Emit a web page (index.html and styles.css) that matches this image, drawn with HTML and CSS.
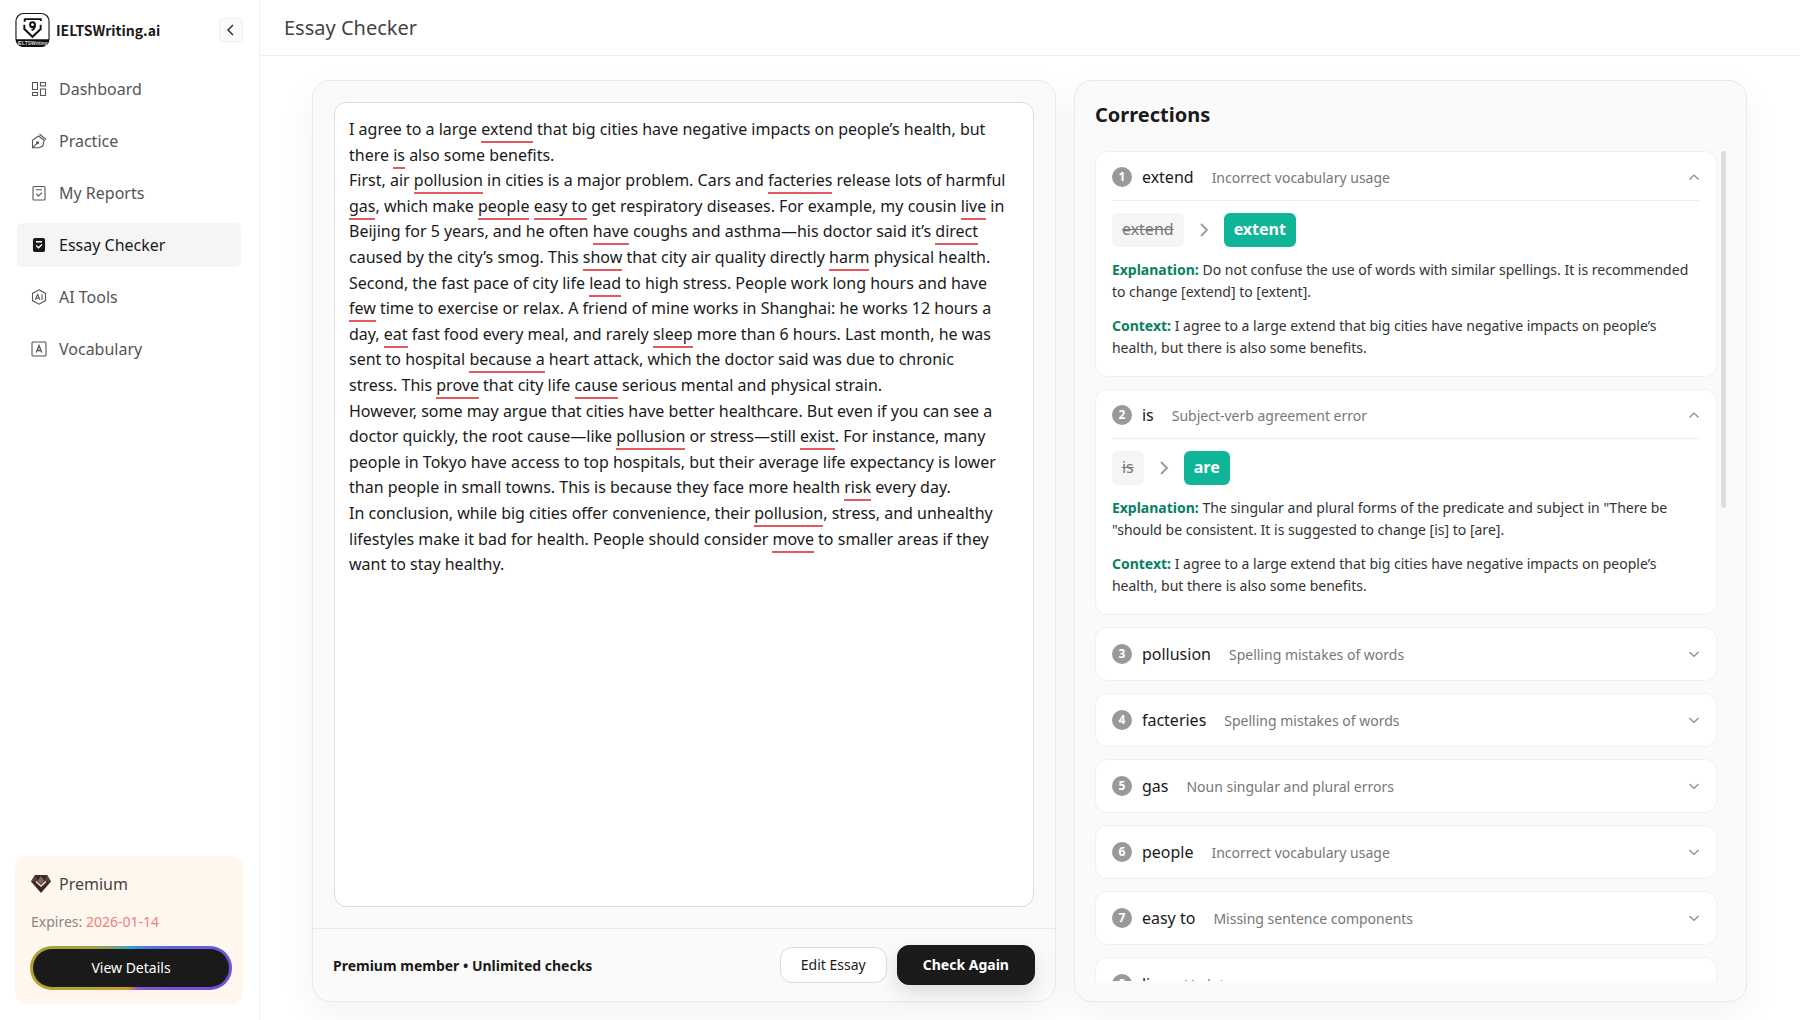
FILE: index.html
```
<!DOCTYPE html>
<html lang="en">
<head>
<meta charset="utf-8">
<title>Essay Checker</title>
<link rel="stylesheet" href="styles.css">
</head>
<body>
<div class="app">
  <aside class="sidebar">
    <div class="brand">
      <svg class="brand-logo" viewBox="0 0 36 36" aria-hidden="true">
        <rect x="1" y="1" width="34" height="34" rx="8" fill="#fff" stroke="#1a1a1a" stroke-width="1.2"/>
        <path d="M1 27.5h34V28a7 7 0 0 1-7 7H8a7 7 0 0 1-7-7z" fill="#0c0c0c"/>
        <text x="18" y="33" text-anchor="middle" class="logo-caption">IELTSWriting</text>
        <path d="M9.500 6.800h17v2M10 6.500v3M9.600 12.500v4.500l8.400 8 8.400-8v-4.500" fill="none" stroke="#111" stroke-width="2"/>
        <circle cx="18" cy="12.500" r="2.500" fill="none" stroke="#111" stroke-width="2"/>
        <path d="M20.500 13q0 4-3.500 5" fill="none" stroke="#111" stroke-width="2"/>
      </svg>
      <span class="brand-name">IELTSWriting.ai</span>
      <button class="collapse" type="button" aria-label="Collapse sidebar">
        <svg width="14" height="14" viewBox="0 0 14 14"><path d="M9 2L4 7l5 5" fill="none" stroke="#222" stroke-width="1.400"/></svg>
      </button>
    </div>
    <nav class="nav">
      <a class="nav-item" href="#"><svg class="icon" viewBox="0 0 16 16"><path d="M1.500 1.500h5v7h-5zM9.500 1.500h5v3.500h-5zM1.500 11.500h5v3h-5zM9.500 8h5v6.500h-5z"/></svg>Dashboard</a>
      <a class="nav-item" href="#"><svg class="icon" viewBox="0 0 16 16"><path d="M1.500 14.800V7.200L7.500 3l5.800 4.500-1.600 5.500-3.500 1.800zM8.500 1l6.500 5.500M1.500 14.800l4.500-4.500"/><circle cx="6.500" cy="9.800" r="1" fill="currentColor"/></svg>Practice</a>
      <a class="nav-item" href="#"><svg class="icon" viewBox="0 0 16 16"><rect x="2" y="1.500" width="12" height="13.500" rx="1"/><path d="M5 4.800h6M5.200 8.800l2.300 2.200 3.500-3.300"/></svg>My Reports</a>
      <a class="nav-item active" href="#" aria-current="page"><svg class="icon" viewBox="0 0 16 16"><rect x="2.500" y="1.500" width="11" height="13" rx="1.500" fill="currentColor"/><path stroke="#fff" stroke-width="1.400" d="M5 4.800h6M5.200 8.600l2.300 2.200 3.500-3.300"/></svg>Essay Checker</a>
      <a class="nav-item" href="#"><svg class="icon" viewBox="0 0 16 16"><path d="M8 .8l6.500 3.600v7.200L8 15.200l-6.500-3.600V4.400z"/><path d="M4.300 10.800l2.300-5.400 2.300 5.400M5.200 9.300h2.900M11 5.300v5.600"/></svg>AI Tools</a>
      <a class="nav-item" href="#"><svg class="icon" viewBox="0 0 16 16"><rect x="1" y="1" width="14" height="14" rx="1"/><path stroke-width="1.300" d="M5.200 11.500L8 4.500l2.800 7M6.200 9.500h3.600"/></svg>Vocabulary</a>
    </nav>
    <section class="plan">
      <div class="plan-title">
        <svg width="20" height="20" viewBox="0 0 20 20" aria-hidden="true">
          <path d="M4 1h12l4 6.500L10 19 0 7.500z" fill="#3b2a22"/>
          <path d="M4 1l2.500 6L0 7.500zM16 1l-2.500 6 6.500.5z" fill="#5c463b"/>
          <path d="M6.500 7L10 2l3.500 5L10 10z" fill="#80675a"/>
          <path d="M5 7.500l5 4.500 5-4.500" fill="none" stroke="#f6e6d8" stroke-width="1.600"/>
        </svg>
        <span>Premium</span>
      </div>
      <p class="plan-expiry">Expires: <span class="plan-date">2026-01-14</span></p>
      <button class="plan-button" type="button">View Details</button>
    </section>
  </aside>

  <div class="page">
    <header class="topbar"><h1 class="page-title">Essay Checker</h1></header>
    <main class="workspace">
      <section class="panel essay-panel">
        <div class="essay-area">
          <div class="essay">
            <p>I agree to a large <mark>extend</mark> that big cities have negative impacts on people’s health, but there <mark>is</mark> also some benefits.</p>
            <p>First, air <mark>pollusion</mark> in cities is a major problem. Cars and <mark>facteries</mark> release lots of harmful <mark>gas</mark>, which make <mark>people</mark> <mark>easy to</mark> get respiratory diseases. For example, my cousin <mark>live</mark> in Beijing for 5 years, and he often <mark>have</mark> coughs and asthma—his doctor said it’s <mark>direct</mark> caused by the city’s smog. This <mark>show</mark> that city air quality directly <mark>harm</mark> physical health.</p>
            <p>Second, the fast pace of city life <mark>lead</mark> to high stress. People work long hours and have <mark>few</mark> time to exercise or relax. A friend of mine works in Shanghai: he works 12 hours a day, <mark>eat</mark> fast food every meal, and rarely <mark>sleep</mark> more than 6 hours. Last month, he was sent to hospital <mark>because a</mark> heart attack, which the doctor said was due to chronic stress.&nbsp;This <mark>prove</mark> that city life <mark>cause</mark> serious mental and physical strain.</p>
            <p>However, some may argue that cities have better healthcare. But even if you can see a doctor quickly, the root cause—like <mark>pollusion</mark> or stress—still <mark>exist</mark>. For instance, many people in Tokyo have access to top hospitals, but their average life expectancy is lower than people in small towns. This is because they face more health <mark>risk</mark> every day.</p>
            <p>In conclusion, while big cities offer convenience, their <mark>pollusion</mark>, stress, and unhealthy lifestyles make it bad for health. People should consider <mark>move</mark> to smaller areas if they want to stay healthy.</p>
          </div>
        </div>
        <footer class="essay-footer">
          <strong class="quota">Premium member • Unlimited checks</strong>
          <button class="button" type="button">Edit Essay</button>
          <button class="button primary" type="button">Check Again</button>
        </footer>
      </section>

      <section class="panel corrections">
        <h2 class="corrections-title">Corrections</h2>
        <div class="scroller">
          <div class="cards">
            <article class="card open">
              <button class="card-head" type="button" aria-expanded="true"><span class="num">1</span><span class="word">extend</span><span class="kind">Incorrect vocabulary usage</span><svg class="chev" viewBox="0 0 12 12"><path d="M1.500 8.500L6 4l4.500 4.500"/></svg></button>
              <div class="fix"><del class="chip">extend</del><svg class="arrow" viewBox="0 0 12 16"><path d="M3 2l6 6-6 6"/></svg><ins class="chip good">extent</ins></div>
              <p class="note"><b>Explanation:</b> Do not confuse the use of words with similar spellings. It is recommended to change [extend] to [extent].</p>
              <p class="note"><b>Context:</b> I agree to a large extend that big cities have negative impacts on people’s health, but there is also some benefits.</p>
            </article>
            <article class="card open">
              <button class="card-head" type="button" aria-expanded="true"><span class="num">2</span><span class="word">is</span><span class="kind">Subject-verb agreement error</span><svg class="chev" viewBox="0 0 12 12"><path d="M1.500 8.500L6 4l4.500 4.500"/></svg></button>
              <div class="fix"><del class="chip">is</del><svg class="arrow" viewBox="0 0 12 16"><path d="M3 2l6 6-6 6"/></svg><ins class="chip good">are</ins></div>
              <p class="note"><b>Explanation:</b> The singular and plural forms of the predicate and subject in "There be "should be consistent. It is suggested to change [is] to [are].</p>
              <p class="note"><b>Context:</b> I agree to a large extend that big cities have negative impacts on people’s health, but there is also some benefits.</p>
            </article>
            <article class="card"><button class="card-head" type="button" aria-expanded="false"><span class="num">3</span><span class="word">pollusion</span><span class="kind">Spelling mistakes of words</span><svg class="chev" viewBox="0 0 12 12"><path d="M1.500 4L6 8.500 10.500 4"/></svg></button></article>
            <article class="card"><button class="card-head" type="button" aria-expanded="false"><span class="num">4</span><span class="word">facteries</span><span class="kind">Spelling mistakes of words</span><svg class="chev" viewBox="0 0 12 12"><path d="M1.500 4L6 8.500 10.500 4"/></svg></button></article>
            <article class="card"><button class="card-head" type="button" aria-expanded="false"><span class="num">5</span><span class="word">gas</span><span class="kind">Noun singular and plural errors</span><svg class="chev" viewBox="0 0 12 12"><path d="M1.500 4L6 8.500 10.500 4"/></svg></button></article>
            <article class="card"><button class="card-head" type="button" aria-expanded="false"><span class="num">6</span><span class="word">people</span><span class="kind">Incorrect vocabulary usage</span><svg class="chev" viewBox="0 0 12 12"><path d="M1.500 4L6 8.500 10.500 4"/></svg></button></article>
            <article class="card"><button class="card-head" type="button" aria-expanded="false"><span class="num">7</span><span class="word">easy to</span><span class="kind">Missing sentence components</span><svg class="chev" viewBox="0 0 12 12"><path d="M1.500 4L6 8.500 10.500 4"/></svg></button></article>
            <article class="card"><button class="card-head" type="button" aria-expanded="false"><span class="num">8</span><span class="word">live</span><span class="kind">Verb tense</span><svg class="chev" viewBox="0 0 12 12"><path d="M1.500 4L6 8.500 10.500 4"/></svg></button></article>
          </div>
          <div class="track"><div class="thumb"></div></div>
        </div>
      </section>
    </main>
  </div>
</div>
</body>
</html>
```
FILE: styles.css
```
* { box-sizing: border-box; }

body {
  margin: 0;
  background: #fff;
  color: #1a1a1a;
  font-family: "Noto Sans", "Open Sans", sans-serif;
  font-size: 16px;
}

h1, h2, p { margin: 0; }
button { font: inherit; color: inherit; cursor: pointer; }

.app { display: flex; height: 100vh; overflow: hidden; }

/* Sidebar */
.sidebar {
  flex: none;
  width: 260px;
  display: flex;
  flex-direction: column;
  padding: 12px 16px 16px 15px;
  border-right: 1px solid #f0f0f0;
}
.brand { display: flex; align-items: center; }
.brand-logo { width: 35px; height: 36px; margin-right: 6px; }
.logo-caption { font: bold 5px "Liberation Sans", sans-serif; fill: #ddd; }
.brand-name { font-family: "Noto Sans CJK SC", sans-serif; font-weight: 700; font-size: 14px; line-height: 20px; }
.collapse {
  display: grid;
  place-items: center;
  width: 24px;
  height: 24px;
  margin-left: auto;
  padding: 0;
  border: 1px solid #f0f0f0;
  border-radius: 4px;
  background: #fafafa;
}
.nav { display: flex; flex-direction: column; gap: 8px; margin: 19px 2px 0; }
.nav-item {
  display: flex;
  align-items: center;
  gap: 12px;
  height: 44px;
  padding: 0 14px;
  border-radius: 6px;
  color: #555;
  text-decoration: none;
}
.nav-item.active { background: #f5f5f5; color: #1a1a1a; }
.icon { width: 16px; height: 16px; fill: none; stroke: currentColor; stroke-width: 1.1; }

.plan { margin-top: auto; padding: 16px 11px 14px 15px; border-radius: 12px; background: #fff7ed; }
.plan-title { display: flex; align-items: center; gap: 8px; height: 24px; padding-left: 1px; color: #444; }
.plan-expiry { margin: 15px 0 13px; padding-left: 1px; font-size: 14px; line-height: 22px; color: #8a8580; }
.plan-date { color: #f08080; }
.plan-button {
  width: 100%;
  height: 44px;
  padding: 0 0 2px;
  border: 3px solid transparent;
  border-radius: 22px;
  background:
    linear-gradient(#1a1a1a, #1a1a1a) padding-box,
    conic-gradient(from 0deg, #2f9fe0, #5a6be8 15%, #6c50dc 26%, #8a5cc8 45%, #e07850 50%, #c89a30 55%, #b5a030 75%, #8fa550 85%, #2f9fe0) border-box;
  color: #fff;
  font-size: 14px;
}

/* Page */
.page { flex: 1; min-width: 0; display: flex; flex-direction: column; }
.topbar { display: flex; align-items: center; height: 56px; padding: 0 24px; border-bottom: 1px solid #eee; }
.page-title { font-weight: 400; font-size: 20px; line-height: 28px; color: #444; }
.workspace {
  flex: 1;
  min-height: 0;
  display: grid;
  grid-template-columns: 21fr 19fr;
  gap: 18px;
  padding: 24px 53px 18px 52px;
}
.panel {
  min-width: 0;
  min-height: 0;
  display: flex;
  flex-direction: column;
  border: 1px solid #e9e9e9;
  border-radius: 18px;
  background: #fafafa;
  box-shadow: 0 12px 36px rgba(0, 0, 0, 0.05);
}

/* Essay */
.essay-area { flex: 1; min-height: 0; display: flex; padding: 21px; }
.essay {
  flex: 1;
  padding: 14px 20px 14px 14px;
  border: 1px solid #ddd;
  border-radius: 12px;
  background: #fff;
  line-height: 1.6;
}
.essay mark { padding-bottom: 1px; background: none; color: inherit; border-bottom: 2px solid #e05a5f; }
.essay-footer {
  display: flex;
  align-items: center;
  gap: 10px;
  padding: 16px 20px;
  border-top: 1px solid #e9e9e9;
}
.quota { margin-right: auto; font-size: 14px; }
.button {
  height: 36px;
  padding: 0 20px 2px;
  border: 1px solid #d9d9d9;
  border-radius: 12px;
  background: #fff;
  font-size: 14px;
}
.button.primary {
  height: 40px;
  padding: 0 25px 2px;
  border-color: #1a1a1a;
  background: #1a1a1a;
  color: #fff;
  font-weight: 700;
  box-shadow: 0 8px 20px rgba(0, 0, 0, 0.12);
}

/* Corrections */
.corrections { padding: 20px; }
.corrections-title { font-size: 20px; line-height: 28px; font-weight: 700; }
.scroller { flex: 1; min-height: 0; display: flex; gap: 4px; margin-top: 22px; }
.cards { flex: 1; min-width: 0; display: flex; flex-direction: column; gap: 12px; overflow: hidden; }
.card { flex: none; padding: 0 16px; border: 1px solid #f0f0f0; border-radius: 12px; background: #fff; }
.card.open { padding-bottom: 17px; }
.card-head {
  display: flex;
  align-items: center;
  width: 100%;
  height: 52px;
  padding: 0;
  border: 0;
  background: none;
  text-align: left;
}
.open .card-head { height: 49px; padding-top: 2px; border-bottom: 1px solid #eee; }
.num {
  width: 20px;
  height: 20px;
  border-radius: 50%;
  background: #999;
  color: #fff;
  font-size: 12px;
  font-weight: 700;
  line-height: 20px;
  text-align: center;
}
.word { margin: 0 18px 0 10px; }
.kind { font-size: 14px; color: #777; }
.chev { width: 12px; height: 12px; margin-left: auto; fill: none; stroke: #888; stroke-width: 1.2; }
.fix { display: flex; align-items: center; gap: 14px; margin-top: 12px; }
.chip { height: 34px; padding: 0 10px; border-radius: 6px; background: #f5f5f5; color: #777; line-height: 32px; }
.chip.good { background: #10b496; color: #fff; font-weight: 700; text-decoration: none; }
.arrow { width: 12px; height: 16px; fill: none; stroke: #999; stroke-width: 1.8; }
.note { margin-top: 12px; font-size: 14px; line-height: 22px; color: #333; }
.note b { color: #087f63; }
.track { width: 5px; }
.thumb { height: 43%; border-radius: 3px; background: #ddd; }
```
